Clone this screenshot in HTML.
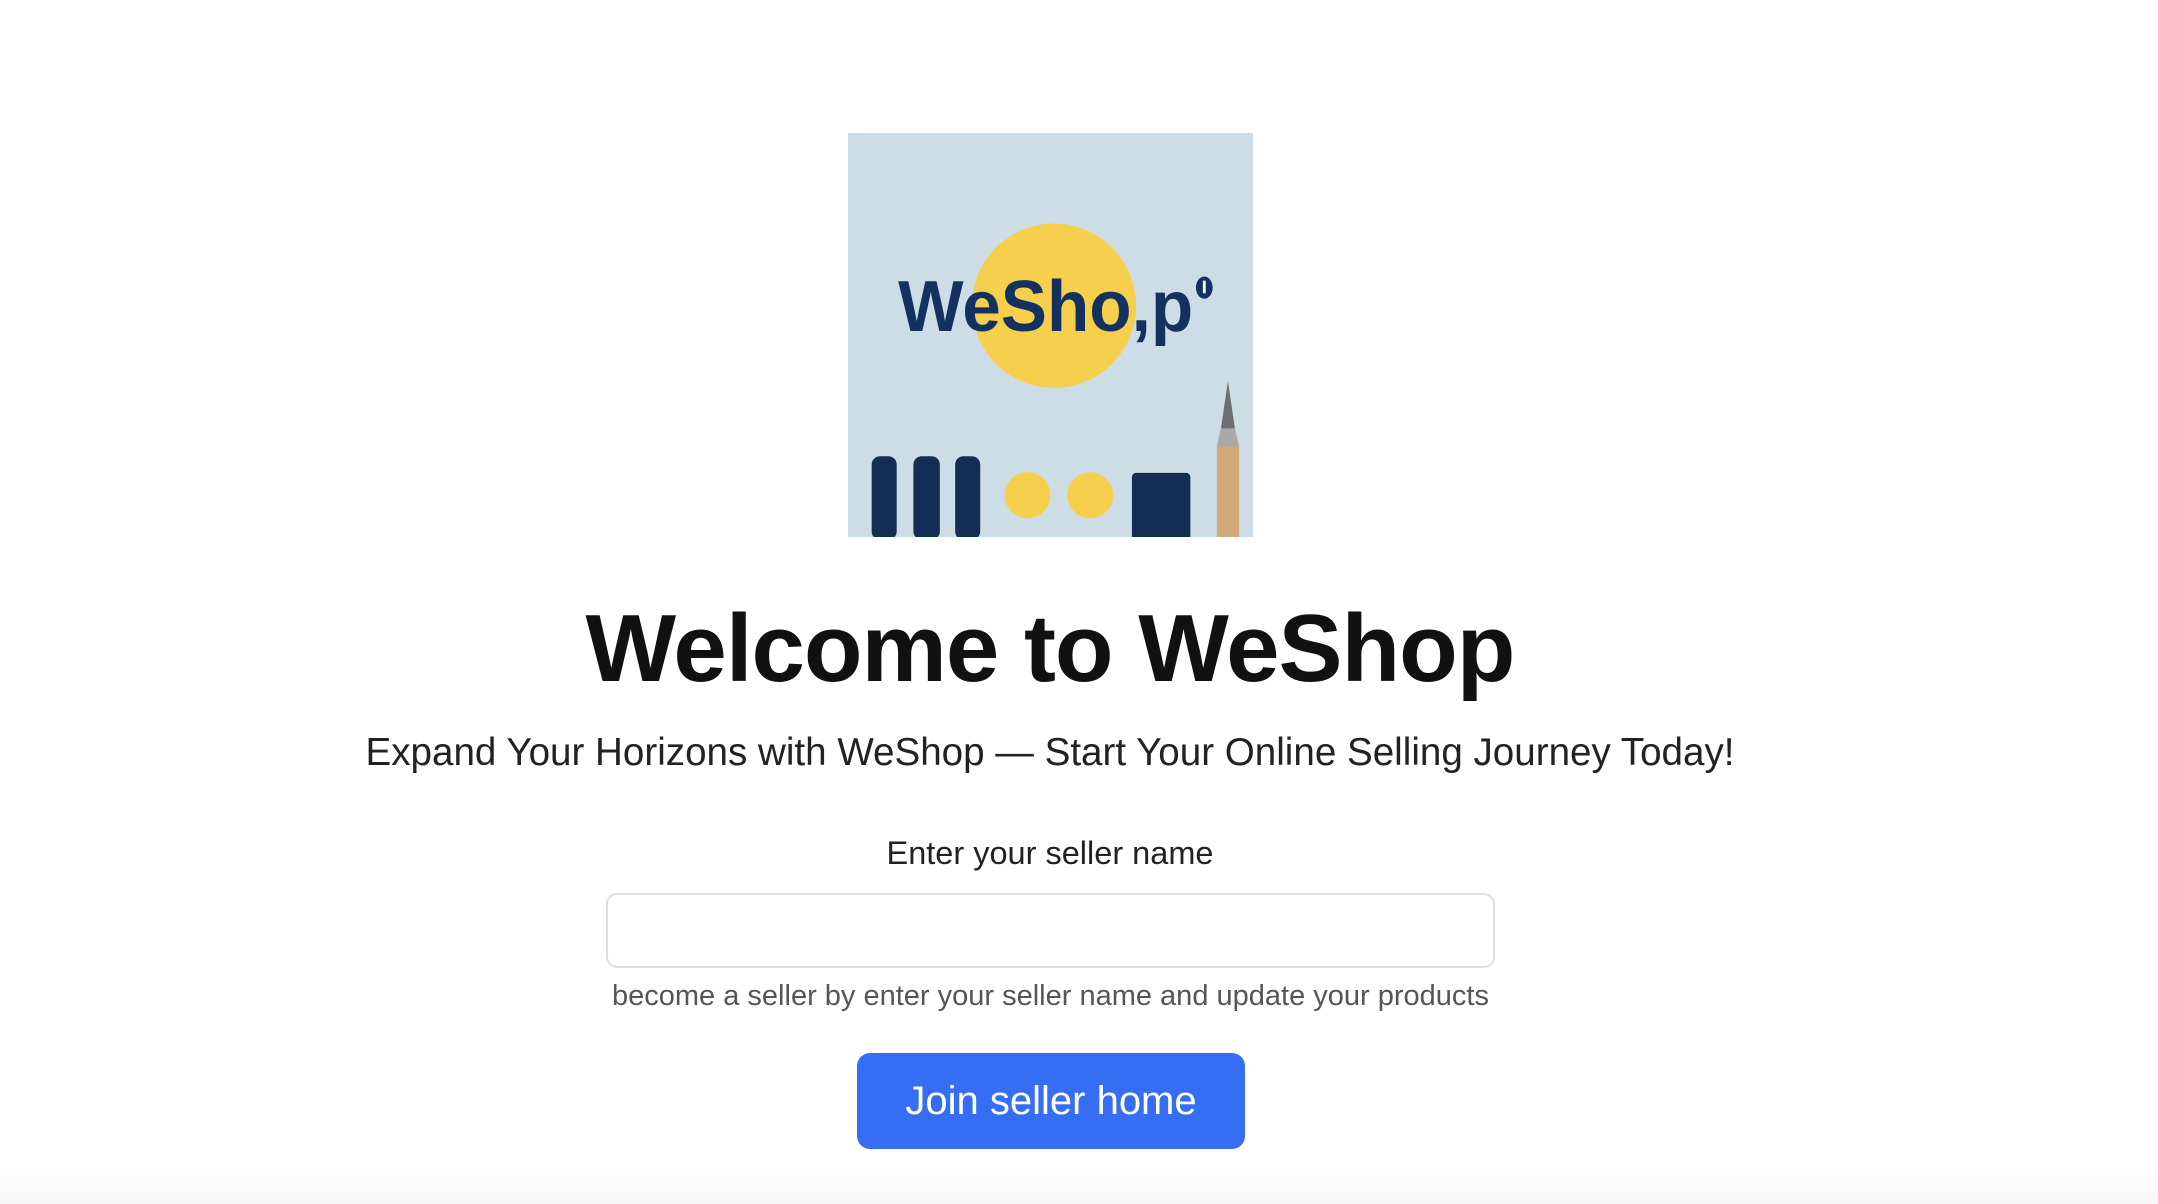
<!DOCTYPE html>
<html><head><meta charset="utf-8"><style>
html,body{margin:0;padding:0;background:#fff;width:2158px;height:1204px;overflow:hidden;font-family:"Liberation Sans",Arial,sans-serif;}
.logo{position:absolute;left:848px;top:133px;width:405px;height:404px;}
h1{position:absolute;left:0;width:2100px;top:594px;margin:0;text-align:center;font-size:96px;font-weight:bold;color:#111;line-height:110px;letter-spacing:-1px;}
.sub{position:absolute;left:0;width:2100px;top:728px;text-align:center;font-size:38.6px;color:#222;line-height:50px;}
.lab{position:absolute;left:0;width:2100px;top:835px;text-align:center;font-size:32.5px;color:#222;}
.inp{position:absolute;left:606px;top:893px;border:2px solid #dedede;border-radius:11px;box-sizing:border-box;width:889px;height:75px;}
.help{position:absolute;left:556px;width:989px;top:980px;text-align:center;font-size:29px;color:#555;}
.btn{position:absolute;left:857px;top:1053px;width:388px;height:96px;background:#356ef3;border-radius:13px;color:#fff;font-size:40px;text-align:center;line-height:96px;}
.shadow{position:absolute;left:0;right:0;bottom:0;height:40px;background:linear-gradient(to bottom,rgba(0,0,0,0),rgba(0,0,0,0.03));}
</style></head><body>
<svg class="logo" viewBox="0 0 291 290" preserveAspectRatio="none">
<rect width="291" height="290" fill="#cddde5"/>
<circle cx="148" cy="124" r="59" fill="#f6d04d"/>
<text x="36" y="142" font-family="Liberation Sans,sans-serif" font-weight="bold" font-size="52" fill="#14325f" textLength="212" lengthAdjust="spacingAndGlyphs">WeSho,p</text>
<ellipse cx="256" cy="111" rx="6" ry="8" fill="#14325f"/><rect x="255" y="106" width="2" height="9" fill="#fff"/>
<g fill="#132d55">
<rect x="17" y="232" width="18" height="60" rx="6"/>
<rect x="47" y="232" width="19" height="60" rx="6"/>
<rect x="77" y="232" width="18" height="60" rx="6"/>
<rect x="204" y="244" width="42" height="50" rx="3"/>
</g>
<circle cx="129" cy="260" r="16.5" fill="#f6d04d"/>
<circle cx="174" cy="260" r="16.5" fill="#f6d04d"/>
<polygon points="265,225 281,225 281,290 265,290" fill="#d2aa7a"/>
<polygon points="268,212 278,212 281,225 265,225" fill="#a9a9a9"/>
<polygon points="273,178 268,212 278,212" fill="#6e6e6e"/>
</svg>
<h1>Welcome to WeShop</h1>
<div class="sub">Expand Your Horizons with WeShop — Start Your Online Selling Journey Today!</div>
<div class="lab">Enter your seller name</div>
<div class="inp"></div>
<div class="help">become a seller by enter your seller name and update your products</div>
<div class="btn">Join seller home</div>
<div class="shadow"></div>
</body></html>
